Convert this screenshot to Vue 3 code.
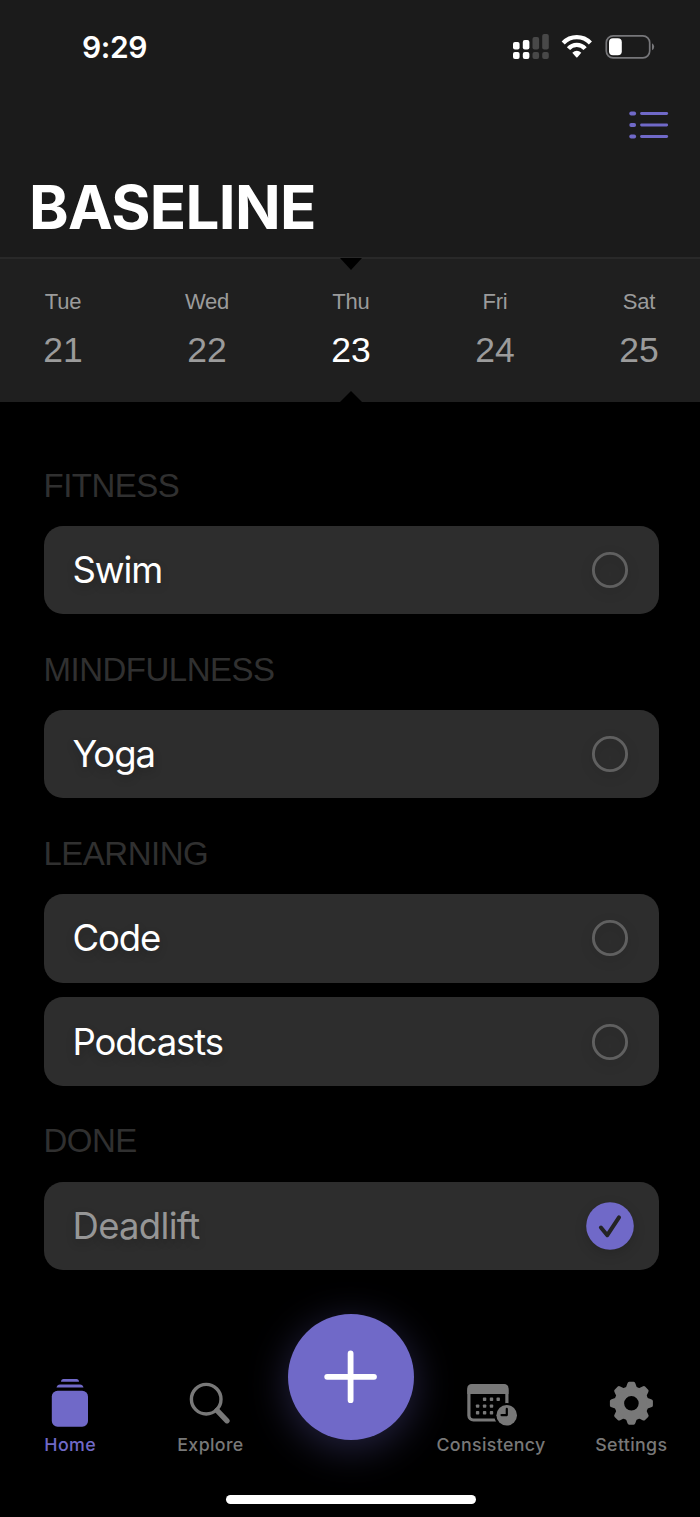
<template>
    <div class="screen">
        <header class="header">
            <div class="status-bar">
                <span class="time">9:29</span>
                <svg class="status-icons" viewBox="0 0 144 26">
                    <g fill="#fff">
                        <rect x="3" y="9" width="6.6" height="7.6" rx="2" />
                        <rect x="12.8" y="7" width="6.6" height="9.6" rx="2" />
                        <rect x="3" y="19" width="6.6" height="7" rx="2" />
                        <rect x="12.8" y="19" width="6.6" height="7" rx="2" />
                    </g>
                    <g fill="#484848">
                        <rect x="22.5" y="4" width="6.6" height="12.6" rx="2" />
                        <rect x="32.2" y="1" width="6.6" height="15.6" rx="2" />
                        <rect x="22.5" y="19" width="6.6" height="7" rx="2" />
                        <rect x="32.2" y="19" width="6.6" height="7" rx="2" />
                    </g>
                    <g fill="none" stroke="#fff" stroke-width="4.3">
                        <path d="M53.2 9.9A18.9 18.9 0 0 1 80.4 9.9" />
                        <path d="M58.5 15.7A11 11 0 0 1 75.1 15.7" />
                    </g>
                    <path d="M62.3 19.8Q66.8 15.6 71.3 19.8L67.4 24.3Q66.8 24.9 66.2 24.3Z" fill="#fff" />
                    <rect x="96.3" y="2.8" width="43.4" height="22" rx="6.8" fill="none" stroke="#77777a" stroke-width="1.7" />
                    <rect x="99" y="5.3" width="12.8" height="16.9" rx="4" fill="#fff" />
                    <path d="M142 10.2Q144.2 11.3 144.2 13.7T142 17.2Z" fill="#77777a" />
                </svg>
            </div>
            <div class="toolbar">
                <svg class="list-icon" viewBox="0 0 40 30">
                    <g v-for="n in 3" :key="n" fill="#7069c8">
                        <rect x=".3" :y="(n - 1) * 11.5 + 1.5" width="6.8" height="4" rx="1.9" />
                        <rect x="11.1" :y="(n - 1) * 11.5 + 2" width="28" height="3" rx="1.4" />
                    </g>
                </svg>
            </div>
            <h1 class="title">BASELINE</h1>
        </header>

        <div class="days">
            <div v-for="day in days" :key="day.date" class="day" :class="{ selected: day.date === selectedDate }">
                <span class="day-name">{{ day.name }}</span>
                <span class="day-date">{{ day.date }}</span>
            </div>
        </div>

        <main class="sections">
            <section v-for="section in sections" :key="section.title" class="section">
                <h2 class="section-title">{{ section.title }}</h2>
                <div class="cards">
                    <div v-for="habit in section.habits" :key="habit.name" class="card" :class="{ done: habit.done }" @click="habit.done = !habit.done">
                        <span class="habit-name">{{ habit.name }}</span>
                        <svg class="check" viewBox="0 0 48 48">
                            <template v-if="habit.done">
                                <circle cx="24" cy="24" r="23.8" fill="#7069c8" />
                                <path d="M14.9 25.5L21.3 33.2L33 15.4" fill="none" stroke="#242424" stroke-width="4" stroke-linecap="round" stroke-linejoin="round" />
                            </template>
                            <circle v-else cx="24" cy="24" r="16.6" fill="none" stroke="#606060" stroke-width="2.9" />
                        </svg>
                    </div>
                </div>
            </section>
        </main>

        <nav class="tab-bar">
            <button class="tab active">
                <svg class="tab-icon" viewBox="0 0 52 52" fill="currentColor">
                    <path d="M17 5.7Q17.2 3 19.5 3H32.5Q34.8 3 35 5.7Z" />
                    <path d="M12.5 11.6Q13.3 8.5 16 8.5H36Q38.7 8.5 39.5 11.6Z" />
                    <rect x="7.8" y="14.7" width="36.2" height="36" rx="5.8" />
                </svg>
                <span>Home</span>
            </button>
            <button class="tab">
                <svg class="tab-icon" viewBox="0 0 52 52" fill="none" stroke="currentColor">
                    <circle cx="22.2" cy="23.2" r="14.8" stroke-width="3.4" />
                    <path d="M33 34.4L43 44.8" stroke-width="5.3" stroke-linecap="round" />
                </svg>
                <span>Explore</span>
            </button>
            <button class="add-button">
                <svg viewBox="0 0 54 54">
                    <path d="M26.6 3.4V50.2M3.2 26.8H50" stroke="#fff" stroke-width="5.8" stroke-linecap="round" />
                </svg>
            </button>
            <button class="tab">
                <svg class="tab-icon" viewBox="0 0 52 52">
                    <rect x="3.9" y="9.5" width="38" height="34.5" rx="4.5" fill="none" stroke="currentColor" stroke-width="3.2" />
                    <path d="M2.3 17.9V12.5Q2.3 7.9 7 7.9H38.8Q43.5 7.9 43.5 12.5V17.9Z" fill="currentColor" />
                    <g fill="currentColor">
                        <rect v-for="(dot, i) in calendarDots" :key="i" :x="dot[0]" :y="dot[1]" width="3.4" height="3.4" rx=".8" />
                    </g>
                    <circle cx="41.7" cy="39.3" r="12.4" fill="#000" />
                    <circle cx="41.7" cy="39.3" r="10.3" fill="currentColor" />
                    <path d="M41.8 32.9V39.1H36.5" fill="none" stroke="#000" stroke-width="2.2" stroke-linecap="round" stroke-linejoin="round" />
                </svg>
                <span>Consistency</span>
            </button>
            <button class="tab">
                <svg class="tab-icon" viewBox="0 0 52 52">
                    <circle cx="26.4" cy="27.3" r="12.2" fill="none" stroke="currentColor" stroke-width="9.8" />
                    <path
                        v-for="n in 8"
                        :key="n"
                        d="M20.6 12.5L22.4 7.5Q22.8 5.8 24.2 5.8H28.6Q30 5.8 30.4 7.5L32.2 12.5Z"
                        :transform="`rotate(${n * 45} 26.4 27.3)`"
                        fill="currentColor"
                    />
                </svg>
                <span>Settings</span>
            </button>
        </nav>
        <div class="home-indicator"></div>
    </div>
</template>

<script setup>
import { ref } from 'vue';

const selectedDate = ref(23);

const days = [
    { name: 'Tue', date: 21 },
    { name: 'Wed', date: 22 },
    { name: 'Thu', date: 23 },
    { name: 'Fri', date: 24 },
    { name: 'Sat', date: 25 },
];

const sections = ref([
    { title: 'FITNESS', habits: [{ name: 'Swim', done: false }] },
    { title: 'MINDFULNESS', habits: [{ name: 'Yoga', done: false }] },
    { title: 'LEARNING', habits: [{ name: 'Code', done: false }, { name: 'Podcasts', done: false }] },
    { title: 'DONE', habits: [{ name: 'Deadlift', done: true }] },
]);

const calendarDots = [
    [17.9, 21.6], [24.8, 21.6], [31.5, 21.6],
    [10.9, 28.4], [17.9, 28.4], [24.8, 28.4],
    [10.9, 35.1], [17.9, 35.1], [24.8, 35.1],
];
</script>

<style>
body {
    background: #000;
}
</style>

<style scoped>
.screen {
    width: 700px;
    height: 1517px;
    box-sizing: border-box;
    display: flex;
    flex-direction: column;
    overflow: hidden;
    background: #000;
    font-family: Inter, sans-serif;
    color: #fff;
}

.header {
    height: 259px;
    flex: none;
    box-sizing: border-box;
    background: #1b1b1b;
    border-bottom: 2px solid #292929;
}

.status-bar {
    display: flex;
    justify-content: space-between;
    align-items: flex-start;
    height: 107px;
    box-sizing: border-box;
    padding: 33px 45px 0 82px;
}

.time {
    font-size: 30px;
    line-height: 28px;
    font-weight: 600;
    letter-spacing: -0.4px;
}

.status-icons {
    width: 144px;
    height: 26px;
    margin-right: 1px;
    overflow: visible;
}

.toolbar {
    display: flex;
    justify-content: flex-end;
    padding: 3px 31px 0 0;
}

.list-icon {
    width: 40px;
    height: 30px;
}

.title {
    margin: 27px 0 0 29px;
    font-size: 60px;
    line-height: 80px;
    font-weight: 700;
    letter-spacing: -0.7px;
}

.days {
    display: grid;
    grid-template-columns: repeat(5, 144px);
    justify-content: center;
    height: 143px;
    flex: none;
    margin-left: 2px;
    box-shadow: -2px 0 #1f1f1f;
    background: #1f1f1f;
    font-family: "Liberation Sans", sans-serif;
}

.day {
    position: relative;
    display: flex;
    flex-direction: column;
    align-items: center;
    padding-top: 30px;
    color: #9b9b9b;
}

.day-name {
    font-size: 22px;
    line-height: 26px;
    letter-spacing: -0.2px;
}

.day-date {
    margin-top: 14px;
    font-size: 35.5px;
    line-height: 42px;
}

.selected .day-date {
    color: #fff;
}

.selected::before,
.selected::after {
    content: '';
    position: absolute;
    left: 61px;
    width: 22px;
    height: 12px;
    background: #000;
}

.selected::before {
    top: -1px;
    clip-path: polygon(0 0, 100% 0, 50% 100%);
}

.selected::after {
    bottom: 0;
    height: 11px;
    clip-path: polygon(0 100%, 50% 0, 100% 100%);
}

.sections {
    padding: 28px 41.5px 0 43.5px;
}

.section-title {
    margin: 0;
    padding: 35.5px 0 20.4px;
    font-family: "Liberation Sans", sans-serif;
    font-size: 33px;
    line-height: 40px;
    font-weight: 400;
    letter-spacing: -0.5px;
    color: #303030;
}

.cards {
    display: flex;
    flex-direction: column;
    gap: 14.9px;
}

.card {
    display: flex;
    align-items: center;
    justify-content: space-between;
    box-sizing: border-box;
    height: 88.3px;
    padding: 0 24.5px 0 29px;
    border-radius: 19px;
    background: #2d2d2d;
    cursor: pointer;
}

.habit-name {
    font-size: 36.5px;
    line-height: 44px;
    letter-spacing: -1.1px;
    text-shadow: 0 4px 10px rgba(0, 0, 0, 0.2);
}

.done .habit-name {
    letter-spacing: -0.7px;
    color: #969696;
}

.check {
    width: 48px;
    height: 48px;
    overflow: visible;
    filter: drop-shadow(0 4px 6px rgba(0, 0, 0, 0.15));
}

.tab-bar {
    display: grid;
    grid-template-columns: repeat(5, 140.3px);
    height: 142px;
    flex: none;
    margin-top: 44px;
}

.tab {
    display: flex;
    flex-direction: column;
    align-items: center;
    padding: 62px 0 0;
    border: none;
    background: none;
    color: #787878;
    font-family: Inter, sans-serif;
    font-size: 17.8px;
    line-height: 24px;
    font-weight: 500;
    letter-spacing: 0.35px;
    cursor: pointer;
}

.tab span {
    margin-top: 5px;
}

.tab-icon {
    width: 52px;
    height: 52px;
    overflow: visible;
}

.active {
    color: #7069c8;
}

.add-button {
    display: flex;
    align-items: center;
    justify-content: center;
    justify-self: center;
    width: 126px;
    height: 126px;
    padding: 0;
    border: none;
    border-radius: 50%;
    background: #7069c8;
    box-shadow: 0 8px 40px rgba(112, 105, 200, 0.34);
    cursor: pointer;
}

.add-button svg {
    width: 54px;
    height: 54px;
}

.home-indicator {
    width: 250px;
    height: 9.5px;
    flex: none;
    margin: 39px 0 0 226px;
    border-radius: 5px;
    background: #fff;
}
</style>
